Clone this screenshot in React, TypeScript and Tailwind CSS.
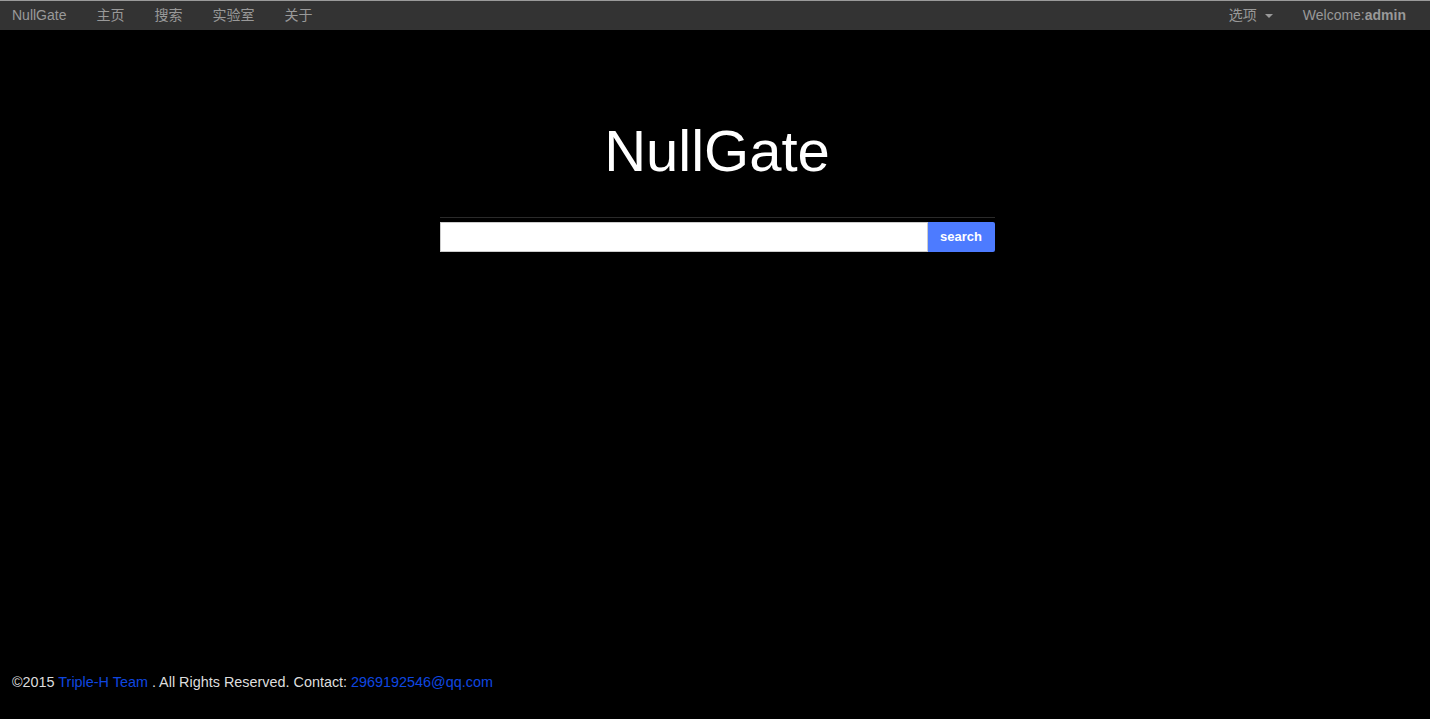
import React from "react";

export default function App() {
  const font = { fontFamily: '"Liberation Sans", Arial, "Noto Sans CJK SC", sans-serif' };
  return (
    <div className="min-h-[719px] h-[719px] bg-black flex flex-col" style={font}>
      <div className="h-[30px] bg-[#333333] border-t border-[#9a9a9a] flex items-center justify-between text-[14px] text-[#999999]">
        <div className="flex items-center">
          <span className="ml-[12px] text-[#9a9a9a]">NullGate</span>
          <span className="ml-[30px]">主页</span>
          <span className="ml-[30px]">搜索</span>
          <span className="ml-[30px]">实验室</span>
          <span className="ml-[30px]">关于</span>
        </div>
        <div className="flex items-center">
          <span>选项</span>
          <span className="ml-[8px] w-0 h-0 border-l-[4px] border-r-[4px] border-t-[4px] border-l-transparent border-r-transparent border-t-[#999999]"></span>
          <span className="ml-[30px] mr-[24px]">Welcome:<b>admin</b></span>
        </div>
      </div>
      <div className="flex-1 flex flex-col items-center pl-[4px]">
        <h1 className="mt-[86px] text-[58px] leading-[70px] text-white">NullGate</h1>
        <div className="mt-[31px] w-[555px] border-t border-[#2a2a2a]"></div>
        <div className="mt-[4px] w-[555px] flex h-[30px]">
          <input className="flex-1 bg-white border border-[#cccccc] outline-none" />
          <button className="w-[67px] bg-[#4d7bff] text-white font-bold text-[13px] rounded-r-[2px]">search</button>
        </div>
      </div>
      <div className="h-[47px] pl-[12px] text-[14.4px] text-[#dddddd]">
        ©2015 <span className="text-[#0f47e0]">Triple-H Team</span> . All Rights Reserved. Contact: <span className="text-[#0f47e0]">2969192546@qq.com</span>
      </div>
    </div>
  );
}
